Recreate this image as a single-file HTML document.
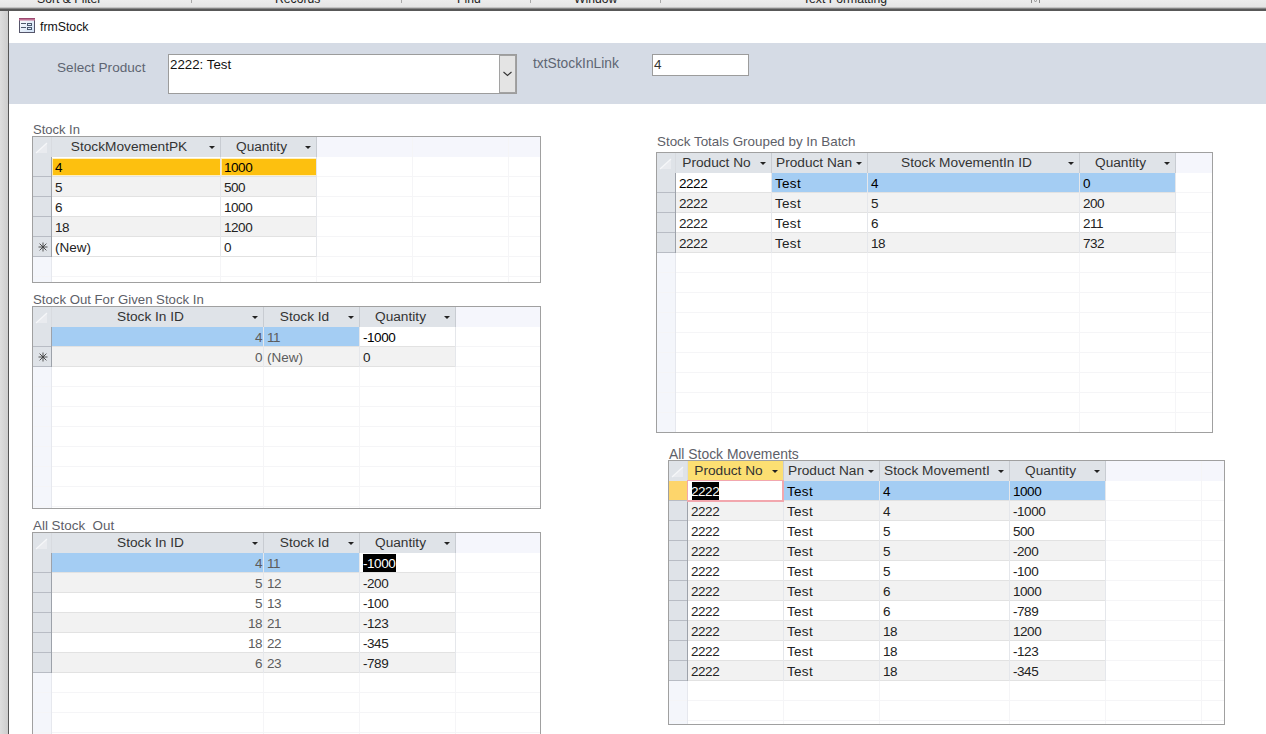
<!DOCTYPE html><html><head><meta charset="utf-8"><style>
html,body{margin:0;padding:0;}
body{width:1266px;height:734px;position:relative;overflow:hidden;background:#fff;font-family:"Liberation Sans", sans-serif;}
div,span{position:absolute;box-sizing:content-box;}
span{white-space:pre;line-height:16px;}
</style></head><body>
<div style="left:0px;top:0px;width:1266px;height:11px;background:linear-gradient(#ececec,#e0e0e0);"></div>
<div style="left:0px;top:7px;width:1266px;height:1px;background:#c4c4c4;"></div>
<div style="left:0px;top:8px;width:1266px;height:1px;background:#858585;"></div>
<div style="left:0px;top:9px;width:1266px;height:2px;background:#585858;"></div>
<div style="left:191px;top:0px;width:1px;height:3px;background:#a8a8a8;"></div>
<div style="left:401px;top:0px;width:1px;height:3px;background:#a8a8a8;"></div>
<div style="left:530px;top:0px;width:1px;height:3px;background:#a8a8a8;"></div>
<div style="left:660px;top:0px;width:1px;height:3px;background:#a8a8a8;"></div>
<span style="left:37px;top:-9px;font-size:12.2px;color:#222;">Sort &amp; Filter</span>
<span style="left:275px;top:-9px;font-size:12.2px;color:#222;">Records</span>
<span style="left:457px;top:-9px;font-size:12.2px;color:#222;">Find</span>
<span style="left:574px;top:-9px;font-size:12.2px;color:#222;">Window</span>
<span style="left:803px;top:-9px;font-size:12.2px;color:#222;">Text Formatting</span>
<svg style="position:absolute;left:1030px;top:0px" width="11" height="5" viewBox="0 0 11 5"><path d="M1.5 0V3M9.5 0V3M4 0.5Q5.5 2.5 7 0.5" stroke="#8a8a8a" stroke-width="1" fill="none"/></svg>
<div style="left:0px;top:11px;width:8px;height:723px;background:linear-gradient(90deg,#dedede,#cdcdcd);"></div>
<div style="left:8px;top:11px;width:1px;height:723px;background:#555;"></div>
<svg style="position:absolute;left:19px;top:18px" width="17" height="16" viewBox="0 0 17 16"><defs><linearGradient id="ig" x1="0" y1="0" x2="1" y2="1"><stop offset="0" stop-color="#ffffff"/><stop offset="1" stop-color="#cfe0f5"/></linearGradient></defs><rect x="0.5" y="0.5" width="15" height="14" fill="url(#ig)" stroke="#55556a" stroke-width="1"/><rect x="0" y="0" width="16" height="2.5" fill="#c27094"/><rect x="0" y="0" width="16" height="1" fill="#9a4a70"/><rect x="2" y="5" width="5" height="1" fill="#4d5a6c"/><rect x="2" y="9" width="5" height="1" fill="#4d5a6c"/><rect x="8.5" y="5.5" width="4" height="2" fill="#e4eefa" stroke="#4a5a70"/><rect x="8.5" y="9.5" width="4" height="2" fill="#e4eefa" stroke="#4a5a70"/></svg>
<span style="left:40px;top:19px;font-size:12.3px;color:#111;">frmStock</span>
<div style="left:9px;top:43px;width:1257px;height:61px;background:#d5dbe5;"></div>
<span style="left:57px;top:60px;font-size:13.6px;color:#5e6572;">Select Product</span>
<div style="left:168px;top:54px;width:347px;height:38px;background:#fff;border:1px solid #9c9c9c"></div>
<div style="left:499px;top:55px;width:15px;height:36px;background:#e4e4e4;border:1px solid #a2a2a2"></div>
<svg style="position:absolute;left:503px;top:71px" width="9" height="6" viewBox="0 0 9 6"><path d="M0.5 1 L4.5 4.5 L8.5 1" fill="none" stroke="#333" stroke-width="1.1"/></svg>
<span style="left:170px;top:57px;font-size:13.3px;color:#111;">2222: Test</span>
<span style="left:533px;top:56px;font-size:13.8px;color:#5e6572;">txtStockInLink</span>
<div style="left:652px;top:54px;width:95px;height:20px;background:#fff;border:1px solid #9c9c9c"></div>
<span style="left:654px;top:57px;font-size:13.5px;color:#333;">4</span>
<span style="left:33px;top:122px;font-size:13px;color:#5d6068;">Stock In</span>
<span style="left:33px;top:292px;font-size:13.2px;color:#5d6068;">Stock Out For Given Stock In</span>
<span style="left:33px;top:518px;font-size:13.4px;color:#5d6068;">All Stock&#160;&#160;Out</span>
<span style="left:657px;top:134px;font-size:13.4px;color:#5d6068;">Stock Totals Grouped by In Batch</span>
<span style="left:669px;top:446px;font-size:13.9px;color:#5d6068;">All Stock Movements</span>
<div style="left:32px;top:136px;width:507px;height:145px;border:1px solid #a0a0a0;background:#fff;overflow:hidden">
<div style="left:284px;top:0px;width:223px;height:20px;background:#f5f6fc;"></div>
<div style="left:0px;top:0px;width:18px;height:145px;background:#f4f6fb;"></div>
<div style="left:0px;top:139px;width:507px;height:1px;background:#f5f5f7;"></div>
<div style="left:0px;top:159px;width:507px;height:1px;background:#f5f5f7;"></div>
<div style="left:187px;top:120px;width:1px;height:25px;background:#f5f5f7;"></div>
<div style="left:283px;top:120px;width:1px;height:25px;background:#f5f5f7;"></div>
<div style="left:379px;top:0px;width:1px;height:145px;background:#f5f5f7;"></div>
<div style="left:475px;top:0px;width:1px;height:145px;background:#f5f5f7;"></div>
<div style="left:18px;top:120px;width:1px;height:25px;background:#e6e8ee;"></div>
<div style="left:0px;top:0px;width:284px;height:20px;background:#dfe3e8;"></div>
<div style="left:187px;top:0px;width:1px;height:20px;background:#c8ccd2;"></div>
<span style="left:19px;top:2px;width:154px;text-align:center;font-size:13.7px;color:#333">StockMovementPK</span>
<div style="left:176px;top:9px;width:0;height:0;border-left:3px solid transparent;border-right:3px solid transparent;border-top:3px solid #222"></div>
<div style="left:283px;top:0px;width:1px;height:20px;background:#c8ccd2;"></div>
<span style="left:188px;top:2px;width:81px;text-align:center;font-size:13.7px;color:#333">Quantity</span>
<div style="left:272px;top:9px;width:0;height:0;border-left:3px solid transparent;border-right:3px solid transparent;border-top:3px solid #222"></div>
<div style="left:18px;top:0px;width:1px;height:20px;background:#d8dbe0;"></div>
<svg style="position:absolute;left:2px;top:5px" width="13" height="12" viewBox="0 0 13 12"><path d="M1 11L12 1V11Z" fill="#e9ebef"/><path d="M1 11L12 1" stroke="#f6f7f9" stroke-width="1.2"/></svg>
<div style="left:0px;top:20px;width:284px;height:20px;background:#fff;"></div>
<div style="left:284px;top:39px;width:223px;height:1px;background:#f5f5f7;"></div>
<div style="left:0px;top:20px;width:18px;height:20px;background:#dfe3e8;"></div>
<div style="left:0px;top:39px;width:18px;height:1px;background:#b8bcc4;"></div>
<div style="left:18px;top:20px;width:1px;height:20px;background:#9da2aa;"></div>
<div style="left:19px;top:21px;width:168px;height:18px;background:#fff0c0;"></div>
<div style="left:20px;top:22px;width:167px;height:16px;background:#fdc00f;"></div>
<div style="left:19px;top:22px;width:1px;height:16px;background:#ffe9a8;"></div>
<div style="left:19px;top:39px;width:169px;height:1px;background:#e2e2e2;"></div>
<div style="left:187px;top:20px;width:1px;height:20px;background:#e5e7eb;"></div>
<span style="left:22px;top:23px;font-size:13.5px;color:#000;letter-spacing:-0.45px;">4</span>
<div style="left:188px;top:21px;width:95px;height:18px;background:#fff0c0;"></div>
<div style="left:189px;top:22px;width:94px;height:16px;background:#fdc00f;"></div>
<div style="left:188px;top:22px;width:1px;height:16px;background:#ffe9a8;"></div>
<div style="left:188px;top:39px;width:96px;height:1px;background:#e2e2e2;"></div>
<div style="left:283px;top:20px;width:1px;height:20px;background:#e5e7eb;"></div>
<span style="left:191px;top:23px;font-size:13.5px;color:#000;letter-spacing:-0.45px;">1000</span>
<div style="left:0px;top:40px;width:284px;height:20px;background:#f2f2f2;"></div>
<div style="left:284px;top:59px;width:223px;height:1px;background:#f5f5f7;"></div>
<div style="left:0px;top:40px;width:18px;height:20px;background:#dfe3e8;"></div>
<div style="left:0px;top:59px;width:18px;height:1px;background:#b8bcc4;"></div>
<div style="left:18px;top:40px;width:1px;height:20px;background:#9da2aa;"></div>
<div style="left:19px;top:59px;width:169px;height:1px;background:#e2e2e2;"></div>
<div style="left:187px;top:40px;width:1px;height:20px;background:#e5e7eb;"></div>
<span style="left:22px;top:43px;font-size:13.5px;color:#222;letter-spacing:-0.45px;">5</span>
<div style="left:188px;top:59px;width:96px;height:1px;background:#e2e2e2;"></div>
<div style="left:283px;top:40px;width:1px;height:20px;background:#e5e7eb;"></div>
<span style="left:191px;top:43px;font-size:13.5px;color:#222;letter-spacing:-0.45px;">500</span>
<div style="left:0px;top:60px;width:284px;height:20px;background:#fff;"></div>
<div style="left:284px;top:79px;width:223px;height:1px;background:#f5f5f7;"></div>
<div style="left:0px;top:60px;width:18px;height:20px;background:#dfe3e8;"></div>
<div style="left:0px;top:79px;width:18px;height:1px;background:#b8bcc4;"></div>
<div style="left:18px;top:60px;width:1px;height:20px;background:#9da2aa;"></div>
<div style="left:19px;top:79px;width:169px;height:1px;background:#e2e2e2;"></div>
<div style="left:187px;top:60px;width:1px;height:20px;background:#e5e7eb;"></div>
<span style="left:22px;top:63px;font-size:13.5px;color:#222;letter-spacing:-0.45px;">6</span>
<div style="left:188px;top:79px;width:96px;height:1px;background:#e2e2e2;"></div>
<div style="left:283px;top:60px;width:1px;height:20px;background:#e5e7eb;"></div>
<span style="left:191px;top:63px;font-size:13.5px;color:#222;letter-spacing:-0.45px;">1000</span>
<div style="left:0px;top:80px;width:284px;height:20px;background:#f2f2f2;"></div>
<div style="left:284px;top:99px;width:223px;height:1px;background:#f5f5f7;"></div>
<div style="left:0px;top:80px;width:18px;height:20px;background:#dfe3e8;"></div>
<div style="left:0px;top:99px;width:18px;height:1px;background:#b8bcc4;"></div>
<div style="left:18px;top:80px;width:1px;height:20px;background:#9da2aa;"></div>
<div style="left:19px;top:99px;width:169px;height:1px;background:#e2e2e2;"></div>
<div style="left:187px;top:80px;width:1px;height:20px;background:#e5e7eb;"></div>
<span style="left:22px;top:83px;font-size:13.5px;color:#222;letter-spacing:-0.45px;">18</span>
<div style="left:188px;top:99px;width:96px;height:1px;background:#e2e2e2;"></div>
<div style="left:283px;top:80px;width:1px;height:20px;background:#e5e7eb;"></div>
<span style="left:191px;top:83px;font-size:13.5px;color:#222;letter-spacing:-0.45px;">1200</span>
<div style="left:0px;top:100px;width:284px;height:20px;background:#fff;"></div>
<div style="left:284px;top:119px;width:223px;height:1px;background:#f5f5f7;"></div>
<div style="left:0px;top:100px;width:18px;height:20px;background:#dfe3e8;"></div>
<div style="left:0px;top:119px;width:18px;height:1px;background:#b8bcc4;"></div>
<div style="left:18px;top:100px;width:1px;height:20px;background:#9da2aa;"></div>
<svg style="position:absolute;left:5px;top:105px" width="10" height="10" viewBox="0 0 10 10"><path d="M5 0.5V9.5M0.5 5H9.5M1.6 1.6L8.4 8.4M8.4 1.6L1.6 8.4" stroke="#404040" stroke-width="0.9" fill="none"/></svg>
<div style="left:19px;top:119px;width:169px;height:1px;background:#e2e2e2;"></div>
<div style="left:187px;top:100px;width:1px;height:20px;background:#e5e7eb;"></div>
<span style="left:22px;top:103px;font-size:13.5px;color:#222;">(New)</span>
<div style="left:188px;top:119px;width:96px;height:1px;background:#e2e2e2;"></div>
<div style="left:283px;top:100px;width:1px;height:20px;background:#e5e7eb;"></div>
<span style="left:191px;top:103px;font-size:13.5px;color:#222;letter-spacing:-0.45px;">0</span>
</div>
<div style="left:32px;top:306px;width:507px;height:201px;border:1px solid #a0a0a0;background:#fff;overflow:hidden">
<div style="left:423px;top:0px;width:84px;height:20px;background:#f5f6fc;"></div>
<div style="left:0px;top:0px;width:18px;height:201px;background:#f4f6fb;"></div>
<div style="left:0px;top:79px;width:507px;height:1px;background:#f5f5f7;"></div>
<div style="left:0px;top:99px;width:507px;height:1px;background:#f5f5f7;"></div>
<div style="left:0px;top:119px;width:507px;height:1px;background:#f5f5f7;"></div>
<div style="left:0px;top:139px;width:507px;height:1px;background:#f5f5f7;"></div>
<div style="left:0px;top:159px;width:507px;height:1px;background:#f5f5f7;"></div>
<div style="left:0px;top:179px;width:507px;height:1px;background:#f5f5f7;"></div>
<div style="left:0px;top:199px;width:507px;height:1px;background:#f5f5f7;"></div>
<div style="left:0px;top:219px;width:507px;height:1px;background:#f5f5f7;"></div>
<div style="left:230px;top:60px;width:1px;height:141px;background:#f5f5f7;"></div>
<div style="left:326px;top:60px;width:1px;height:141px;background:#f5f5f7;"></div>
<div style="left:422px;top:60px;width:1px;height:141px;background:#f5f5f7;"></div>
<div style="left:18px;top:60px;width:1px;height:141px;background:#e6e8ee;"></div>
<div style="left:0px;top:0px;width:423px;height:20px;background:#dfe3e8;"></div>
<div style="left:230px;top:0px;width:1px;height:20px;background:#c8ccd2;"></div>
<span style="left:19px;top:2px;width:197px;text-align:center;font-size:13.7px;color:#333">Stock In ID</span>
<div style="left:219px;top:9px;width:0;height:0;border-left:3px solid transparent;border-right:3px solid transparent;border-top:3px solid #222"></div>
<div style="left:326px;top:0px;width:1px;height:20px;background:#c8ccd2;"></div>
<span style="left:231px;top:2px;width:81px;text-align:center;font-size:13.7px;color:#333">Stock Id</span>
<div style="left:315px;top:9px;width:0;height:0;border-left:3px solid transparent;border-right:3px solid transparent;border-top:3px solid #222"></div>
<div style="left:422px;top:0px;width:1px;height:20px;background:#c8ccd2;"></div>
<span style="left:327px;top:2px;width:81px;text-align:center;font-size:13.7px;color:#333">Quantity</span>
<div style="left:411px;top:9px;width:0;height:0;border-left:3px solid transparent;border-right:3px solid transparent;border-top:3px solid #222"></div>
<div style="left:18px;top:0px;width:1px;height:20px;background:#d8dbe0;"></div>
<svg style="position:absolute;left:2px;top:5px" width="13" height="12" viewBox="0 0 13 12"><path d="M1 11L12 1V11Z" fill="#e9ebef"/><path d="M1 11L12 1" stroke="#f6f7f9" stroke-width="1.2"/></svg>
<div style="left:0px;top:20px;width:423px;height:20px;background:#fff;"></div>
<div style="left:423px;top:39px;width:84px;height:1px;background:#f5f5f7;"></div>
<div style="left:0px;top:20px;width:18px;height:20px;background:#dfe3e8;"></div>
<div style="left:0px;top:39px;width:18px;height:1px;background:#b8bcc4;"></div>
<div style="left:18px;top:20px;width:1px;height:20px;background:#9da2aa;"></div>
<div style="left:19px;top:20px;width:211px;height:19px;background:#a4cdf3;"></div>
<div style="left:19px;top:39px;width:212px;height:1px;background:#e2e2e2;"></div>
<div style="left:230px;top:20px;width:1px;height:20px;background:#e5e7eb;"></div>
<span style="left:19px;top:23px;width:210px;text-align:right;font-size:13.5px;color:#5c5c5c;letter-spacing:-0.45px;">4</span>
<div style="left:231px;top:20px;width:95px;height:19px;background:#a4cdf3;"></div>
<div style="left:231px;top:39px;width:96px;height:1px;background:#e2e2e2;"></div>
<div style="left:326px;top:20px;width:1px;height:20px;background:#e5e7eb;"></div>
<span style="left:234px;top:23px;font-size:13.5px;color:#5c5c5c;letter-spacing:-0.45px;">11</span>
<div style="left:327px;top:20px;width:95px;height:19px;background:#fff;"></div>
<div style="left:327px;top:39px;width:96px;height:1px;background:#e2e2e2;"></div>
<div style="left:422px;top:20px;width:1px;height:20px;background:#e5e7eb;"></div>
<span style="left:330px;top:23px;font-size:13.5px;color:#000;letter-spacing:-0.45px;">-1000</span>
<div style="left:0px;top:40px;width:423px;height:20px;background:#f2f2f2;"></div>
<div style="left:423px;top:59px;width:84px;height:1px;background:#f5f5f7;"></div>
<div style="left:0px;top:40px;width:18px;height:20px;background:#dfe3e8;"></div>
<div style="left:0px;top:59px;width:18px;height:1px;background:#b8bcc4;"></div>
<div style="left:18px;top:40px;width:1px;height:20px;background:#9da2aa;"></div>
<svg style="position:absolute;left:5px;top:45px" width="10" height="10" viewBox="0 0 10 10"><path d="M5 0.5V9.5M0.5 5H9.5M1.6 1.6L8.4 8.4M8.4 1.6L1.6 8.4" stroke="#404040" stroke-width="0.9" fill="none"/></svg>
<div style="left:19px;top:59px;width:212px;height:1px;background:#e2e2e2;"></div>
<div style="left:230px;top:40px;width:1px;height:20px;background:#e5e7eb;"></div>
<span style="left:19px;top:43px;width:210px;text-align:right;font-size:13.5px;color:#5c5c5c;letter-spacing:-0.45px;">0</span>
<div style="left:231px;top:59px;width:96px;height:1px;background:#e2e2e2;"></div>
<div style="left:326px;top:40px;width:1px;height:20px;background:#e5e7eb;"></div>
<span style="left:234px;top:43px;font-size:13.5px;color:#5c5c5c;">(New)</span>
<div style="left:327px;top:59px;width:96px;height:1px;background:#e2e2e2;"></div>
<div style="left:422px;top:40px;width:1px;height:20px;background:#e5e7eb;"></div>
<span style="left:330px;top:43px;font-size:13.5px;color:#222;letter-spacing:-0.45px;">0</span>
</div>
<div style="left:32px;top:532px;width:507px;height:218px;border:1px solid #a0a0a0;background:#fff;overflow:hidden">
<div style="left:423px;top:0px;width:84px;height:20px;background:#f5f6fc;"></div>
<div style="left:0px;top:0px;width:18px;height:218px;background:#f4f6fb;"></div>
<div style="left:0px;top:159px;width:507px;height:1px;background:#f5f5f7;"></div>
<div style="left:0px;top:179px;width:507px;height:1px;background:#f5f5f7;"></div>
<div style="left:0px;top:199px;width:507px;height:1px;background:#f5f5f7;"></div>
<div style="left:0px;top:219px;width:507px;height:1px;background:#f5f5f7;"></div>
<div style="left:230px;top:140px;width:1px;height:78px;background:#f5f5f7;"></div>
<div style="left:326px;top:140px;width:1px;height:78px;background:#f5f5f7;"></div>
<div style="left:422px;top:140px;width:1px;height:78px;background:#f5f5f7;"></div>
<div style="left:18px;top:140px;width:1px;height:78px;background:#e6e8ee;"></div>
<div style="left:0px;top:0px;width:423px;height:20px;background:#dfe3e8;"></div>
<div style="left:230px;top:0px;width:1px;height:20px;background:#c8ccd2;"></div>
<span style="left:19px;top:2px;width:197px;text-align:center;font-size:13.7px;color:#333">Stock In ID</span>
<div style="left:219px;top:9px;width:0;height:0;border-left:3px solid transparent;border-right:3px solid transparent;border-top:3px solid #222"></div>
<div style="left:326px;top:0px;width:1px;height:20px;background:#c8ccd2;"></div>
<span style="left:231px;top:2px;width:81px;text-align:center;font-size:13.7px;color:#333">Stock Id</span>
<div style="left:315px;top:9px;width:0;height:0;border-left:3px solid transparent;border-right:3px solid transparent;border-top:3px solid #222"></div>
<div style="left:422px;top:0px;width:1px;height:20px;background:#c8ccd2;"></div>
<span style="left:327px;top:2px;width:81px;text-align:center;font-size:13.7px;color:#333">Quantity</span>
<div style="left:411px;top:9px;width:0;height:0;border-left:3px solid transparent;border-right:3px solid transparent;border-top:3px solid #222"></div>
<div style="left:18px;top:0px;width:1px;height:20px;background:#d8dbe0;"></div>
<svg style="position:absolute;left:2px;top:5px" width="13" height="12" viewBox="0 0 13 12"><path d="M1 11L12 1V11Z" fill="#e9ebef"/><path d="M1 11L12 1" stroke="#f6f7f9" stroke-width="1.2"/></svg>
<div style="left:0px;top:20px;width:423px;height:20px;background:#fff;"></div>
<div style="left:423px;top:39px;width:84px;height:1px;background:#f5f5f7;"></div>
<div style="left:0px;top:20px;width:18px;height:20px;background:#dfe3e8;"></div>
<div style="left:0px;top:39px;width:18px;height:1px;background:#b8bcc4;"></div>
<div style="left:18px;top:20px;width:1px;height:20px;background:#9da2aa;"></div>
<div style="left:19px;top:20px;width:211px;height:19px;background:#a4cdf3;"></div>
<div style="left:19px;top:39px;width:212px;height:1px;background:#e2e2e2;"></div>
<div style="left:230px;top:20px;width:1px;height:20px;background:#e5e7eb;"></div>
<span style="left:19px;top:23px;width:210px;text-align:right;font-size:13.5px;color:#5c5c5c;letter-spacing:-0.45px;">4</span>
<div style="left:231px;top:20px;width:95px;height:19px;background:#a4cdf3;"></div>
<div style="left:231px;top:39px;width:96px;height:1px;background:#e2e2e2;"></div>
<div style="left:326px;top:20px;width:1px;height:20px;background:#e5e7eb;"></div>
<span style="left:234px;top:23px;font-size:13.5px;color:#5c5c5c;letter-spacing:-0.45px;">11</span>
<div style="left:327px;top:20px;width:95px;height:19px;background:#fff;"></div>
<div style="left:330px;top:21px;width:33px;height:18px;background:#000;"></div>
<div style="left:327px;top:39px;width:96px;height:1px;background:#e2e2e2;"></div>
<div style="left:422px;top:20px;width:1px;height:20px;background:#e5e7eb;"></div>
<span style="left:330px;top:23px;font-size:13.5px;color:#fff;letter-spacing:-0.45px;">-1000</span>
<div style="left:0px;top:40px;width:423px;height:20px;background:#f2f2f2;"></div>
<div style="left:423px;top:59px;width:84px;height:1px;background:#f5f5f7;"></div>
<div style="left:0px;top:40px;width:18px;height:20px;background:#dfe3e8;"></div>
<div style="left:0px;top:59px;width:18px;height:1px;background:#b8bcc4;"></div>
<div style="left:18px;top:40px;width:1px;height:20px;background:#9da2aa;"></div>
<div style="left:19px;top:59px;width:212px;height:1px;background:#e2e2e2;"></div>
<div style="left:230px;top:40px;width:1px;height:20px;background:#e5e7eb;"></div>
<span style="left:19px;top:43px;width:210px;text-align:right;font-size:13.5px;color:#5c5c5c;letter-spacing:-0.45px;">5</span>
<div style="left:231px;top:59px;width:96px;height:1px;background:#e2e2e2;"></div>
<div style="left:326px;top:40px;width:1px;height:20px;background:#e5e7eb;"></div>
<span style="left:234px;top:43px;font-size:13.5px;color:#5c5c5c;letter-spacing:-0.45px;">12</span>
<div style="left:327px;top:59px;width:96px;height:1px;background:#e2e2e2;"></div>
<div style="left:422px;top:40px;width:1px;height:20px;background:#e5e7eb;"></div>
<span style="left:330px;top:43px;font-size:13.5px;color:#222;letter-spacing:-0.45px;">-200</span>
<div style="left:0px;top:60px;width:423px;height:20px;background:#fff;"></div>
<div style="left:423px;top:79px;width:84px;height:1px;background:#f5f5f7;"></div>
<div style="left:0px;top:60px;width:18px;height:20px;background:#dfe3e8;"></div>
<div style="left:0px;top:79px;width:18px;height:1px;background:#b8bcc4;"></div>
<div style="left:18px;top:60px;width:1px;height:20px;background:#9da2aa;"></div>
<div style="left:19px;top:79px;width:212px;height:1px;background:#e2e2e2;"></div>
<div style="left:230px;top:60px;width:1px;height:20px;background:#e5e7eb;"></div>
<span style="left:19px;top:63px;width:210px;text-align:right;font-size:13.5px;color:#5c5c5c;letter-spacing:-0.45px;">5</span>
<div style="left:231px;top:79px;width:96px;height:1px;background:#e2e2e2;"></div>
<div style="left:326px;top:60px;width:1px;height:20px;background:#e5e7eb;"></div>
<span style="left:234px;top:63px;font-size:13.5px;color:#5c5c5c;letter-spacing:-0.45px;">13</span>
<div style="left:327px;top:79px;width:96px;height:1px;background:#e2e2e2;"></div>
<div style="left:422px;top:60px;width:1px;height:20px;background:#e5e7eb;"></div>
<span style="left:330px;top:63px;font-size:13.5px;color:#222;letter-spacing:-0.45px;">-100</span>
<div style="left:0px;top:80px;width:423px;height:20px;background:#f2f2f2;"></div>
<div style="left:423px;top:99px;width:84px;height:1px;background:#f5f5f7;"></div>
<div style="left:0px;top:80px;width:18px;height:20px;background:#dfe3e8;"></div>
<div style="left:0px;top:99px;width:18px;height:1px;background:#b8bcc4;"></div>
<div style="left:18px;top:80px;width:1px;height:20px;background:#9da2aa;"></div>
<div style="left:19px;top:99px;width:212px;height:1px;background:#e2e2e2;"></div>
<div style="left:230px;top:80px;width:1px;height:20px;background:#e5e7eb;"></div>
<span style="left:19px;top:83px;width:210px;text-align:right;font-size:13.5px;color:#5c5c5c;letter-spacing:-0.45px;">18</span>
<div style="left:231px;top:99px;width:96px;height:1px;background:#e2e2e2;"></div>
<div style="left:326px;top:80px;width:1px;height:20px;background:#e5e7eb;"></div>
<span style="left:234px;top:83px;font-size:13.5px;color:#5c5c5c;letter-spacing:-0.45px;">21</span>
<div style="left:327px;top:99px;width:96px;height:1px;background:#e2e2e2;"></div>
<div style="left:422px;top:80px;width:1px;height:20px;background:#e5e7eb;"></div>
<span style="left:330px;top:83px;font-size:13.5px;color:#222;letter-spacing:-0.45px;">-123</span>
<div style="left:0px;top:100px;width:423px;height:20px;background:#fff;"></div>
<div style="left:423px;top:119px;width:84px;height:1px;background:#f5f5f7;"></div>
<div style="left:0px;top:100px;width:18px;height:20px;background:#dfe3e8;"></div>
<div style="left:0px;top:119px;width:18px;height:1px;background:#b8bcc4;"></div>
<div style="left:18px;top:100px;width:1px;height:20px;background:#9da2aa;"></div>
<div style="left:19px;top:119px;width:212px;height:1px;background:#e2e2e2;"></div>
<div style="left:230px;top:100px;width:1px;height:20px;background:#e5e7eb;"></div>
<span style="left:19px;top:103px;width:210px;text-align:right;font-size:13.5px;color:#5c5c5c;letter-spacing:-0.45px;">18</span>
<div style="left:231px;top:119px;width:96px;height:1px;background:#e2e2e2;"></div>
<div style="left:326px;top:100px;width:1px;height:20px;background:#e5e7eb;"></div>
<span style="left:234px;top:103px;font-size:13.5px;color:#5c5c5c;letter-spacing:-0.45px;">22</span>
<div style="left:327px;top:119px;width:96px;height:1px;background:#e2e2e2;"></div>
<div style="left:422px;top:100px;width:1px;height:20px;background:#e5e7eb;"></div>
<span style="left:330px;top:103px;font-size:13.5px;color:#222;letter-spacing:-0.45px;">-345</span>
<div style="left:0px;top:120px;width:423px;height:20px;background:#f2f2f2;"></div>
<div style="left:423px;top:139px;width:84px;height:1px;background:#f5f5f7;"></div>
<div style="left:0px;top:120px;width:18px;height:20px;background:#dfe3e8;"></div>
<div style="left:0px;top:139px;width:18px;height:1px;background:#b8bcc4;"></div>
<div style="left:18px;top:120px;width:1px;height:20px;background:#9da2aa;"></div>
<div style="left:19px;top:139px;width:212px;height:1px;background:#e2e2e2;"></div>
<div style="left:230px;top:120px;width:1px;height:20px;background:#e5e7eb;"></div>
<span style="left:19px;top:123px;width:210px;text-align:right;font-size:13.5px;color:#5c5c5c;letter-spacing:-0.45px;">6</span>
<div style="left:231px;top:139px;width:96px;height:1px;background:#e2e2e2;"></div>
<div style="left:326px;top:120px;width:1px;height:20px;background:#e5e7eb;"></div>
<span style="left:234px;top:123px;font-size:13.5px;color:#5c5c5c;letter-spacing:-0.45px;">23</span>
<div style="left:327px;top:139px;width:96px;height:1px;background:#e2e2e2;"></div>
<div style="left:422px;top:120px;width:1px;height:20px;background:#e5e7eb;"></div>
<span style="left:330px;top:123px;font-size:13.5px;color:#222;letter-spacing:-0.45px;">-789</span>
</div>
<div style="left:656px;top:152px;width:555px;height:279px;border:1px solid #a0a0a0;background:#fff;overflow:hidden">
<div style="left:519px;top:0px;width:36px;height:20px;background:#f5f6fc;"></div>
<div style="left:0px;top:0px;width:18px;height:279px;background:#f4f6fb;"></div>
<div style="left:0px;top:119px;width:555px;height:1px;background:#f5f5f7;"></div>
<div style="left:0px;top:139px;width:555px;height:1px;background:#f5f5f7;"></div>
<div style="left:0px;top:159px;width:555px;height:1px;background:#f5f5f7;"></div>
<div style="left:0px;top:179px;width:555px;height:1px;background:#f5f5f7;"></div>
<div style="left:0px;top:199px;width:555px;height:1px;background:#f5f5f7;"></div>
<div style="left:0px;top:219px;width:555px;height:1px;background:#f5f5f7;"></div>
<div style="left:0px;top:239px;width:555px;height:1px;background:#f5f5f7;"></div>
<div style="left:0px;top:259px;width:555px;height:1px;background:#f5f5f7;"></div>
<div style="left:0px;top:279px;width:555px;height:1px;background:#f5f5f7;"></div>
<div style="left:114px;top:100px;width:1px;height:179px;background:#f5f5f7;"></div>
<div style="left:210px;top:100px;width:1px;height:179px;background:#f5f5f7;"></div>
<div style="left:422px;top:100px;width:1px;height:179px;background:#f5f5f7;"></div>
<div style="left:518px;top:100px;width:1px;height:179px;background:#f5f5f7;"></div>
<div style="left:18px;top:100px;width:1px;height:179px;background:#e6e8ee;"></div>
<div style="left:0px;top:0px;width:519px;height:20px;background:#dfe3e8;"></div>
<div style="left:114px;top:0px;width:1px;height:20px;background:#c8ccd2;"></div>
<span style="left:19px;top:2px;width:81px;text-align:center;font-size:13.7px;color:#333">Product No</span>
<div style="left:103px;top:9px;width:0;height:0;border-left:3px solid transparent;border-right:3px solid transparent;border-top:3px solid #222"></div>
<div style="left:210px;top:0px;width:1px;height:20px;background:#c8ccd2;"></div>
<span style="left:119px;top:2px;font-size:13.7px;color:#333;">Product Nan</span>
<div style="left:199px;top:9px;width:0;height:0;border-left:3px solid transparent;border-right:3px solid transparent;border-top:3px solid #222"></div>
<div style="left:422px;top:0px;width:1px;height:20px;background:#c8ccd2;"></div>
<span style="left:211px;top:2px;width:197px;text-align:center;font-size:13.7px;color:#333">Stock MovementIn ID</span>
<div style="left:411px;top:9px;width:0;height:0;border-left:3px solid transparent;border-right:3px solid transparent;border-top:3px solid #222"></div>
<div style="left:518px;top:0px;width:1px;height:20px;background:#c8ccd2;"></div>
<span style="left:423px;top:2px;width:81px;text-align:center;font-size:13.7px;color:#333">Quantity</span>
<div style="left:507px;top:9px;width:0;height:0;border-left:3px solid transparent;border-right:3px solid transparent;border-top:3px solid #222"></div>
<div style="left:18px;top:0px;width:1px;height:20px;background:#d8dbe0;"></div>
<svg style="position:absolute;left:2px;top:5px" width="13" height="12" viewBox="0 0 13 12"><path d="M1 11L12 1V11Z" fill="#e9ebef"/><path d="M1 11L12 1" stroke="#f6f7f9" stroke-width="1.2"/></svg>
<div style="left:0px;top:20px;width:519px;height:20px;background:#fff;"></div>
<div style="left:519px;top:39px;width:36px;height:1px;background:#f5f5f7;"></div>
<div style="left:0px;top:20px;width:18px;height:20px;background:#dfe3e8;"></div>
<div style="left:0px;top:39px;width:18px;height:1px;background:#b8bcc4;"></div>
<div style="left:18px;top:20px;width:1px;height:20px;background:#9da2aa;"></div>
<div style="left:19px;top:20px;width:95px;height:19px;background:#fff;"></div>
<div style="left:19px;top:39px;width:96px;height:1px;background:#e2e2e2;"></div>
<div style="left:114px;top:20px;width:1px;height:20px;background:#e5e7eb;"></div>
<span style="left:22px;top:23px;font-size:13.5px;color:#000;letter-spacing:-0.45px;">2222</span>
<div style="left:115px;top:20px;width:95px;height:19px;background:#a4cdf3;"></div>
<div style="left:115px;top:39px;width:96px;height:1px;background:#e2e2e2;"></div>
<div style="left:210px;top:20px;width:1px;height:20px;background:#e5e7eb;"></div>
<span style="left:118px;top:23px;font-size:13.5px;color:#000;letter-spacing:0.3px;">Test</span>
<div style="left:211px;top:20px;width:211px;height:19px;background:#a4cdf3;"></div>
<div style="left:211px;top:39px;width:212px;height:1px;background:#e2e2e2;"></div>
<div style="left:422px;top:20px;width:1px;height:20px;background:#e5e7eb;"></div>
<span style="left:214px;top:23px;font-size:13.5px;color:#000;letter-spacing:-0.45px;">4</span>
<div style="left:423px;top:20px;width:95px;height:19px;background:#a4cdf3;"></div>
<div style="left:423px;top:39px;width:96px;height:1px;background:#e2e2e2;"></div>
<div style="left:518px;top:20px;width:1px;height:20px;background:#e5e7eb;"></div>
<span style="left:426px;top:23px;font-size:13.5px;color:#000;letter-spacing:-0.45px;">0</span>
<div style="left:0px;top:40px;width:519px;height:20px;background:#f2f2f2;"></div>
<div style="left:519px;top:59px;width:36px;height:1px;background:#f5f5f7;"></div>
<div style="left:0px;top:40px;width:18px;height:20px;background:#dfe3e8;"></div>
<div style="left:0px;top:59px;width:18px;height:1px;background:#b8bcc4;"></div>
<div style="left:18px;top:40px;width:1px;height:20px;background:#9da2aa;"></div>
<div style="left:19px;top:59px;width:96px;height:1px;background:#e2e2e2;"></div>
<div style="left:114px;top:40px;width:1px;height:20px;background:#e5e7eb;"></div>
<span style="left:22px;top:43px;font-size:13.5px;color:#222;letter-spacing:-0.45px;">2222</span>
<div style="left:115px;top:59px;width:96px;height:1px;background:#e2e2e2;"></div>
<div style="left:210px;top:40px;width:1px;height:20px;background:#e5e7eb;"></div>
<span style="left:118px;top:43px;font-size:13.5px;color:#222;letter-spacing:0.3px;">Test</span>
<div style="left:211px;top:59px;width:212px;height:1px;background:#e2e2e2;"></div>
<div style="left:422px;top:40px;width:1px;height:20px;background:#e5e7eb;"></div>
<span style="left:214px;top:43px;font-size:13.5px;color:#222;letter-spacing:-0.45px;">5</span>
<div style="left:423px;top:59px;width:96px;height:1px;background:#e2e2e2;"></div>
<div style="left:518px;top:40px;width:1px;height:20px;background:#e5e7eb;"></div>
<span style="left:426px;top:43px;font-size:13.5px;color:#222;letter-spacing:-0.45px;">200</span>
<div style="left:0px;top:60px;width:519px;height:20px;background:#fff;"></div>
<div style="left:519px;top:79px;width:36px;height:1px;background:#f5f5f7;"></div>
<div style="left:0px;top:60px;width:18px;height:20px;background:#dfe3e8;"></div>
<div style="left:0px;top:79px;width:18px;height:1px;background:#b8bcc4;"></div>
<div style="left:18px;top:60px;width:1px;height:20px;background:#9da2aa;"></div>
<div style="left:19px;top:79px;width:96px;height:1px;background:#e2e2e2;"></div>
<div style="left:114px;top:60px;width:1px;height:20px;background:#e5e7eb;"></div>
<span style="left:22px;top:63px;font-size:13.5px;color:#222;letter-spacing:-0.45px;">2222</span>
<div style="left:115px;top:79px;width:96px;height:1px;background:#e2e2e2;"></div>
<div style="left:210px;top:60px;width:1px;height:20px;background:#e5e7eb;"></div>
<span style="left:118px;top:63px;font-size:13.5px;color:#222;letter-spacing:0.3px;">Test</span>
<div style="left:211px;top:79px;width:212px;height:1px;background:#e2e2e2;"></div>
<div style="left:422px;top:60px;width:1px;height:20px;background:#e5e7eb;"></div>
<span style="left:214px;top:63px;font-size:13.5px;color:#222;letter-spacing:-0.45px;">6</span>
<div style="left:423px;top:79px;width:96px;height:1px;background:#e2e2e2;"></div>
<div style="left:518px;top:60px;width:1px;height:20px;background:#e5e7eb;"></div>
<span style="left:426px;top:63px;font-size:13.5px;color:#222;letter-spacing:-0.45px;">211</span>
<div style="left:0px;top:80px;width:519px;height:20px;background:#f2f2f2;"></div>
<div style="left:519px;top:99px;width:36px;height:1px;background:#f5f5f7;"></div>
<div style="left:0px;top:80px;width:18px;height:20px;background:#dfe3e8;"></div>
<div style="left:0px;top:99px;width:18px;height:1px;background:#b8bcc4;"></div>
<div style="left:18px;top:80px;width:1px;height:20px;background:#9da2aa;"></div>
<div style="left:19px;top:99px;width:96px;height:1px;background:#e2e2e2;"></div>
<div style="left:114px;top:80px;width:1px;height:20px;background:#e5e7eb;"></div>
<span style="left:22px;top:83px;font-size:13.5px;color:#222;letter-spacing:-0.45px;">2222</span>
<div style="left:115px;top:99px;width:96px;height:1px;background:#e2e2e2;"></div>
<div style="left:210px;top:80px;width:1px;height:20px;background:#e5e7eb;"></div>
<span style="left:118px;top:83px;font-size:13.5px;color:#222;letter-spacing:0.3px;">Test</span>
<div style="left:211px;top:99px;width:212px;height:1px;background:#e2e2e2;"></div>
<div style="left:422px;top:80px;width:1px;height:20px;background:#e5e7eb;"></div>
<span style="left:214px;top:83px;font-size:13.5px;color:#222;letter-spacing:-0.45px;">18</span>
<div style="left:423px;top:99px;width:96px;height:1px;background:#e2e2e2;"></div>
<div style="left:518px;top:80px;width:1px;height:20px;background:#e5e7eb;"></div>
<span style="left:426px;top:83px;font-size:13.5px;color:#222;letter-spacing:-0.45px;">732</span>
</div>
<div style="left:668px;top:460px;width:555px;height:263px;border:1px solid #a0a0a0;background:#fff;overflow:hidden">
<div style="left:437px;top:0px;width:118px;height:20px;background:#f5f6fc;"></div>
<div style="left:0px;top:0px;width:18px;height:263px;background:#f4f6fb;"></div>
<div style="left:0px;top:239px;width:555px;height:1px;background:#f5f5f7;"></div>
<div style="left:0px;top:259px;width:555px;height:1px;background:#f5f5f7;"></div>
<div style="left:0px;top:279px;width:555px;height:1px;background:#f5f5f7;"></div>
<div style="left:114px;top:220px;width:1px;height:43px;background:#f5f5f7;"></div>
<div style="left:210px;top:220px;width:1px;height:43px;background:#f5f5f7;"></div>
<div style="left:340px;top:220px;width:1px;height:43px;background:#f5f5f7;"></div>
<div style="left:436px;top:220px;width:1px;height:43px;background:#f5f5f7;"></div>
<div style="left:532px;top:0px;width:1px;height:263px;background:#f5f5f7;"></div>
<div style="left:18px;top:220px;width:1px;height:43px;background:#e6e8ee;"></div>
<div style="left:0px;top:0px;width:437px;height:20px;background:#dfe3e8;"></div>
<div style="left:19px;top:0px;width:95px;height:20px;background:#fcdf72;"></div>
<div style="left:114px;top:0px;width:1px;height:20px;background:#c8ccd2;"></div>
<span style="left:19px;top:2px;width:81px;text-align:center;font-size:13.7px;color:#333">Product No</span>
<div style="left:103px;top:9px;width:0;height:0;border-left:3px solid transparent;border-right:3px solid transparent;border-top:3px solid #222"></div>
<div style="left:210px;top:0px;width:1px;height:20px;background:#c8ccd2;"></div>
<span style="left:119px;top:2px;font-size:13.7px;color:#333;">Product Nan</span>
<div style="left:199px;top:9px;width:0;height:0;border-left:3px solid transparent;border-right:3px solid transparent;border-top:3px solid #222"></div>
<div style="left:340px;top:0px;width:1px;height:20px;background:#c8ccd2;"></div>
<span style="left:215px;top:2px;font-size:13.7px;color:#333;">Stock MovementI</span>
<div style="left:329px;top:9px;width:0;height:0;border-left:3px solid transparent;border-right:3px solid transparent;border-top:3px solid #222"></div>
<div style="left:436px;top:0px;width:1px;height:20px;background:#c8ccd2;"></div>
<span style="left:341px;top:2px;width:81px;text-align:center;font-size:13.7px;color:#333">Quantity</span>
<div style="left:425px;top:9px;width:0;height:0;border-left:3px solid transparent;border-right:3px solid transparent;border-top:3px solid #222"></div>
<div style="left:18px;top:0px;width:1px;height:20px;background:#d8dbe0;"></div>
<svg style="position:absolute;left:2px;top:5px" width="13" height="12" viewBox="0 0 13 12"><path d="M1 11L12 1V11Z" fill="#e9ebef"/><path d="M1 11L12 1" stroke="#f6f7f9" stroke-width="1.2"/></svg>
<div style="left:0px;top:20px;width:437px;height:20px;background:#fff;"></div>
<div style="left:437px;top:39px;width:118px;height:1px;background:#f5f5f7;"></div>
<div style="left:0px;top:20px;width:18px;height:20px;background:#fdd56b;"></div>
<div style="left:0px;top:39px;width:18px;height:1px;background:#b8bcc4;"></div>
<div style="left:18px;top:20px;width:1px;height:20px;background:#9da2aa;"></div>
<div style="left:19px;top:20px;width:95px;height:19px;background:#fff;"></div>
<div style="left:23px;top:21px;width:27px;height:18px;background:#000;"></div>
<div style="left:19px;top:39px;width:96px;height:1px;background:#e2e2e2;"></div>
<div style="left:114px;top:20px;width:1px;height:20px;background:#e5e7eb;"></div>
<span style="left:22px;top:23px;font-size:13.5px;color:#fff;letter-spacing:-0.45px;">2222</span>
<div style="left:115px;top:20px;width:95px;height:19px;background:#a4cdf3;"></div>
<div style="left:115px;top:39px;width:96px;height:1px;background:#e2e2e2;"></div>
<div style="left:210px;top:20px;width:1px;height:20px;background:#e5e7eb;"></div>
<span style="left:118px;top:23px;font-size:13.5px;color:#000;letter-spacing:0.3px;">Test</span>
<div style="left:211px;top:20px;width:129px;height:19px;background:#a4cdf3;"></div>
<div style="left:211px;top:39px;width:130px;height:1px;background:#e2e2e2;"></div>
<div style="left:340px;top:20px;width:1px;height:20px;background:#e5e7eb;"></div>
<span style="left:214px;top:23px;font-size:13.5px;color:#000;letter-spacing:-0.45px;">4</span>
<div style="left:341px;top:20px;width:95px;height:19px;background:#a4cdf3;"></div>
<div style="left:341px;top:39px;width:96px;height:1px;background:#e2e2e2;"></div>
<div style="left:436px;top:20px;width:1px;height:20px;background:#e5e7eb;"></div>
<span style="left:344px;top:23px;font-size:13.5px;color:#000;letter-spacing:-0.45px;">1000</span>
<div style="left:0px;top:40px;width:437px;height:20px;background:#f2f2f2;"></div>
<div style="left:437px;top:59px;width:118px;height:1px;background:#f5f5f7;"></div>
<div style="left:0px;top:40px;width:18px;height:20px;background:#dfe3e8;"></div>
<div style="left:0px;top:59px;width:18px;height:1px;background:#b8bcc4;"></div>
<div style="left:18px;top:40px;width:1px;height:20px;background:#9da2aa;"></div>
<div style="left:19px;top:59px;width:96px;height:1px;background:#e2e2e2;"></div>
<div style="left:114px;top:40px;width:1px;height:20px;background:#e5e7eb;"></div>
<span style="left:22px;top:43px;font-size:13.5px;color:#222;letter-spacing:-0.45px;">2222</span>
<div style="left:115px;top:59px;width:96px;height:1px;background:#e2e2e2;"></div>
<div style="left:210px;top:40px;width:1px;height:20px;background:#e5e7eb;"></div>
<span style="left:118px;top:43px;font-size:13.5px;color:#222;letter-spacing:0.3px;">Test</span>
<div style="left:211px;top:59px;width:130px;height:1px;background:#e2e2e2;"></div>
<div style="left:340px;top:40px;width:1px;height:20px;background:#e5e7eb;"></div>
<span style="left:214px;top:43px;font-size:13.5px;color:#222;letter-spacing:-0.45px;">4</span>
<div style="left:341px;top:59px;width:96px;height:1px;background:#e2e2e2;"></div>
<div style="left:436px;top:40px;width:1px;height:20px;background:#e5e7eb;"></div>
<span style="left:344px;top:43px;font-size:13.5px;color:#222;letter-spacing:-0.45px;">-1000</span>
<div style="left:0px;top:60px;width:437px;height:20px;background:#fff;"></div>
<div style="left:437px;top:79px;width:118px;height:1px;background:#f5f5f7;"></div>
<div style="left:0px;top:60px;width:18px;height:20px;background:#dfe3e8;"></div>
<div style="left:0px;top:79px;width:18px;height:1px;background:#b8bcc4;"></div>
<div style="left:18px;top:60px;width:1px;height:20px;background:#9da2aa;"></div>
<div style="left:19px;top:79px;width:96px;height:1px;background:#e2e2e2;"></div>
<div style="left:114px;top:60px;width:1px;height:20px;background:#e5e7eb;"></div>
<span style="left:22px;top:63px;font-size:13.5px;color:#222;letter-spacing:-0.45px;">2222</span>
<div style="left:115px;top:79px;width:96px;height:1px;background:#e2e2e2;"></div>
<div style="left:210px;top:60px;width:1px;height:20px;background:#e5e7eb;"></div>
<span style="left:118px;top:63px;font-size:13.5px;color:#222;letter-spacing:0.3px;">Test</span>
<div style="left:211px;top:79px;width:130px;height:1px;background:#e2e2e2;"></div>
<div style="left:340px;top:60px;width:1px;height:20px;background:#e5e7eb;"></div>
<span style="left:214px;top:63px;font-size:13.5px;color:#222;letter-spacing:-0.45px;">5</span>
<div style="left:341px;top:79px;width:96px;height:1px;background:#e2e2e2;"></div>
<div style="left:436px;top:60px;width:1px;height:20px;background:#e5e7eb;"></div>
<span style="left:344px;top:63px;font-size:13.5px;color:#222;letter-spacing:-0.45px;">500</span>
<div style="left:0px;top:80px;width:437px;height:20px;background:#f2f2f2;"></div>
<div style="left:437px;top:99px;width:118px;height:1px;background:#f5f5f7;"></div>
<div style="left:0px;top:80px;width:18px;height:20px;background:#dfe3e8;"></div>
<div style="left:0px;top:99px;width:18px;height:1px;background:#b8bcc4;"></div>
<div style="left:18px;top:80px;width:1px;height:20px;background:#9da2aa;"></div>
<div style="left:19px;top:99px;width:96px;height:1px;background:#e2e2e2;"></div>
<div style="left:114px;top:80px;width:1px;height:20px;background:#e5e7eb;"></div>
<span style="left:22px;top:83px;font-size:13.5px;color:#222;letter-spacing:-0.45px;">2222</span>
<div style="left:115px;top:99px;width:96px;height:1px;background:#e2e2e2;"></div>
<div style="left:210px;top:80px;width:1px;height:20px;background:#e5e7eb;"></div>
<span style="left:118px;top:83px;font-size:13.5px;color:#222;letter-spacing:0.3px;">Test</span>
<div style="left:211px;top:99px;width:130px;height:1px;background:#e2e2e2;"></div>
<div style="left:340px;top:80px;width:1px;height:20px;background:#e5e7eb;"></div>
<span style="left:214px;top:83px;font-size:13.5px;color:#222;letter-spacing:-0.45px;">5</span>
<div style="left:341px;top:99px;width:96px;height:1px;background:#e2e2e2;"></div>
<div style="left:436px;top:80px;width:1px;height:20px;background:#e5e7eb;"></div>
<span style="left:344px;top:83px;font-size:13.5px;color:#222;letter-spacing:-0.45px;">-200</span>
<div style="left:0px;top:100px;width:437px;height:20px;background:#fff;"></div>
<div style="left:437px;top:119px;width:118px;height:1px;background:#f5f5f7;"></div>
<div style="left:0px;top:100px;width:18px;height:20px;background:#dfe3e8;"></div>
<div style="left:0px;top:119px;width:18px;height:1px;background:#b8bcc4;"></div>
<div style="left:18px;top:100px;width:1px;height:20px;background:#9da2aa;"></div>
<div style="left:19px;top:119px;width:96px;height:1px;background:#e2e2e2;"></div>
<div style="left:114px;top:100px;width:1px;height:20px;background:#e5e7eb;"></div>
<span style="left:22px;top:103px;font-size:13.5px;color:#222;letter-spacing:-0.45px;">2222</span>
<div style="left:115px;top:119px;width:96px;height:1px;background:#e2e2e2;"></div>
<div style="left:210px;top:100px;width:1px;height:20px;background:#e5e7eb;"></div>
<span style="left:118px;top:103px;font-size:13.5px;color:#222;letter-spacing:0.3px;">Test</span>
<div style="left:211px;top:119px;width:130px;height:1px;background:#e2e2e2;"></div>
<div style="left:340px;top:100px;width:1px;height:20px;background:#e5e7eb;"></div>
<span style="left:214px;top:103px;font-size:13.5px;color:#222;letter-spacing:-0.45px;">5</span>
<div style="left:341px;top:119px;width:96px;height:1px;background:#e2e2e2;"></div>
<div style="left:436px;top:100px;width:1px;height:20px;background:#e5e7eb;"></div>
<span style="left:344px;top:103px;font-size:13.5px;color:#222;letter-spacing:-0.45px;">-100</span>
<div style="left:0px;top:120px;width:437px;height:20px;background:#f2f2f2;"></div>
<div style="left:437px;top:139px;width:118px;height:1px;background:#f5f5f7;"></div>
<div style="left:0px;top:120px;width:18px;height:20px;background:#dfe3e8;"></div>
<div style="left:0px;top:139px;width:18px;height:1px;background:#b8bcc4;"></div>
<div style="left:18px;top:120px;width:1px;height:20px;background:#9da2aa;"></div>
<div style="left:19px;top:139px;width:96px;height:1px;background:#e2e2e2;"></div>
<div style="left:114px;top:120px;width:1px;height:20px;background:#e5e7eb;"></div>
<span style="left:22px;top:123px;font-size:13.5px;color:#222;letter-spacing:-0.45px;">2222</span>
<div style="left:115px;top:139px;width:96px;height:1px;background:#e2e2e2;"></div>
<div style="left:210px;top:120px;width:1px;height:20px;background:#e5e7eb;"></div>
<span style="left:118px;top:123px;font-size:13.5px;color:#222;letter-spacing:0.3px;">Test</span>
<div style="left:211px;top:139px;width:130px;height:1px;background:#e2e2e2;"></div>
<div style="left:340px;top:120px;width:1px;height:20px;background:#e5e7eb;"></div>
<span style="left:214px;top:123px;font-size:13.5px;color:#222;letter-spacing:-0.45px;">6</span>
<div style="left:341px;top:139px;width:96px;height:1px;background:#e2e2e2;"></div>
<div style="left:436px;top:120px;width:1px;height:20px;background:#e5e7eb;"></div>
<span style="left:344px;top:123px;font-size:13.5px;color:#222;letter-spacing:-0.45px;">1000</span>
<div style="left:0px;top:140px;width:437px;height:20px;background:#fff;"></div>
<div style="left:437px;top:159px;width:118px;height:1px;background:#f5f5f7;"></div>
<div style="left:0px;top:140px;width:18px;height:20px;background:#dfe3e8;"></div>
<div style="left:0px;top:159px;width:18px;height:1px;background:#b8bcc4;"></div>
<div style="left:18px;top:140px;width:1px;height:20px;background:#9da2aa;"></div>
<div style="left:19px;top:159px;width:96px;height:1px;background:#e2e2e2;"></div>
<div style="left:114px;top:140px;width:1px;height:20px;background:#e5e7eb;"></div>
<span style="left:22px;top:143px;font-size:13.5px;color:#222;letter-spacing:-0.45px;">2222</span>
<div style="left:115px;top:159px;width:96px;height:1px;background:#e2e2e2;"></div>
<div style="left:210px;top:140px;width:1px;height:20px;background:#e5e7eb;"></div>
<span style="left:118px;top:143px;font-size:13.5px;color:#222;letter-spacing:0.3px;">Test</span>
<div style="left:211px;top:159px;width:130px;height:1px;background:#e2e2e2;"></div>
<div style="left:340px;top:140px;width:1px;height:20px;background:#e5e7eb;"></div>
<span style="left:214px;top:143px;font-size:13.5px;color:#222;letter-spacing:-0.45px;">6</span>
<div style="left:341px;top:159px;width:96px;height:1px;background:#e2e2e2;"></div>
<div style="left:436px;top:140px;width:1px;height:20px;background:#e5e7eb;"></div>
<span style="left:344px;top:143px;font-size:13.5px;color:#222;letter-spacing:-0.45px;">-789</span>
<div style="left:0px;top:160px;width:437px;height:20px;background:#f2f2f2;"></div>
<div style="left:437px;top:179px;width:118px;height:1px;background:#f5f5f7;"></div>
<div style="left:0px;top:160px;width:18px;height:20px;background:#dfe3e8;"></div>
<div style="left:0px;top:179px;width:18px;height:1px;background:#b8bcc4;"></div>
<div style="left:18px;top:160px;width:1px;height:20px;background:#9da2aa;"></div>
<div style="left:19px;top:179px;width:96px;height:1px;background:#e2e2e2;"></div>
<div style="left:114px;top:160px;width:1px;height:20px;background:#e5e7eb;"></div>
<span style="left:22px;top:163px;font-size:13.5px;color:#222;letter-spacing:-0.45px;">2222</span>
<div style="left:115px;top:179px;width:96px;height:1px;background:#e2e2e2;"></div>
<div style="left:210px;top:160px;width:1px;height:20px;background:#e5e7eb;"></div>
<span style="left:118px;top:163px;font-size:13.5px;color:#222;letter-spacing:0.3px;">Test</span>
<div style="left:211px;top:179px;width:130px;height:1px;background:#e2e2e2;"></div>
<div style="left:340px;top:160px;width:1px;height:20px;background:#e5e7eb;"></div>
<span style="left:214px;top:163px;font-size:13.5px;color:#222;letter-spacing:-0.45px;">18</span>
<div style="left:341px;top:179px;width:96px;height:1px;background:#e2e2e2;"></div>
<div style="left:436px;top:160px;width:1px;height:20px;background:#e5e7eb;"></div>
<span style="left:344px;top:163px;font-size:13.5px;color:#222;letter-spacing:-0.45px;">1200</span>
<div style="left:0px;top:180px;width:437px;height:20px;background:#fff;"></div>
<div style="left:437px;top:199px;width:118px;height:1px;background:#f5f5f7;"></div>
<div style="left:0px;top:180px;width:18px;height:20px;background:#dfe3e8;"></div>
<div style="left:0px;top:199px;width:18px;height:1px;background:#b8bcc4;"></div>
<div style="left:18px;top:180px;width:1px;height:20px;background:#9da2aa;"></div>
<div style="left:19px;top:199px;width:96px;height:1px;background:#e2e2e2;"></div>
<div style="left:114px;top:180px;width:1px;height:20px;background:#e5e7eb;"></div>
<span style="left:22px;top:183px;font-size:13.5px;color:#222;letter-spacing:-0.45px;">2222</span>
<div style="left:115px;top:199px;width:96px;height:1px;background:#e2e2e2;"></div>
<div style="left:210px;top:180px;width:1px;height:20px;background:#e5e7eb;"></div>
<span style="left:118px;top:183px;font-size:13.5px;color:#222;letter-spacing:0.3px;">Test</span>
<div style="left:211px;top:199px;width:130px;height:1px;background:#e2e2e2;"></div>
<div style="left:340px;top:180px;width:1px;height:20px;background:#e5e7eb;"></div>
<span style="left:214px;top:183px;font-size:13.5px;color:#222;letter-spacing:-0.45px;">18</span>
<div style="left:341px;top:199px;width:96px;height:1px;background:#e2e2e2;"></div>
<div style="left:436px;top:180px;width:1px;height:20px;background:#e5e7eb;"></div>
<span style="left:344px;top:183px;font-size:13.5px;color:#222;letter-spacing:-0.45px;">-123</span>
<div style="left:0px;top:200px;width:437px;height:20px;background:#f2f2f2;"></div>
<div style="left:437px;top:219px;width:118px;height:1px;background:#f5f5f7;"></div>
<div style="left:0px;top:200px;width:18px;height:20px;background:#dfe3e8;"></div>
<div style="left:0px;top:219px;width:18px;height:1px;background:#b8bcc4;"></div>
<div style="left:18px;top:200px;width:1px;height:20px;background:#9da2aa;"></div>
<div style="left:19px;top:219px;width:96px;height:1px;background:#e2e2e2;"></div>
<div style="left:114px;top:200px;width:1px;height:20px;background:#e5e7eb;"></div>
<span style="left:22px;top:203px;font-size:13.5px;color:#222;letter-spacing:-0.45px;">2222</span>
<div style="left:115px;top:219px;width:96px;height:1px;background:#e2e2e2;"></div>
<div style="left:210px;top:200px;width:1px;height:20px;background:#e5e7eb;"></div>
<span style="left:118px;top:203px;font-size:13.5px;color:#222;letter-spacing:0.3px;">Test</span>
<div style="left:211px;top:219px;width:130px;height:1px;background:#e2e2e2;"></div>
<div style="left:340px;top:200px;width:1px;height:20px;background:#e5e7eb;"></div>
<span style="left:214px;top:203px;font-size:13.5px;color:#222;letter-spacing:-0.45px;">18</span>
<div style="left:341px;top:219px;width:96px;height:1px;background:#e2e2e2;"></div>
<div style="left:436px;top:200px;width:1px;height:20px;background:#e5e7eb;"></div>
<span style="left:344px;top:203px;font-size:13.5px;color:#222;letter-spacing:-0.45px;">-345</span>
<div style="left:18px;top:19px;width:94px;height:19px;border-style:solid;border-color:#f2a7ae;border-width:1px 2px 2px 1px"></div>
</div>
</body></html>
